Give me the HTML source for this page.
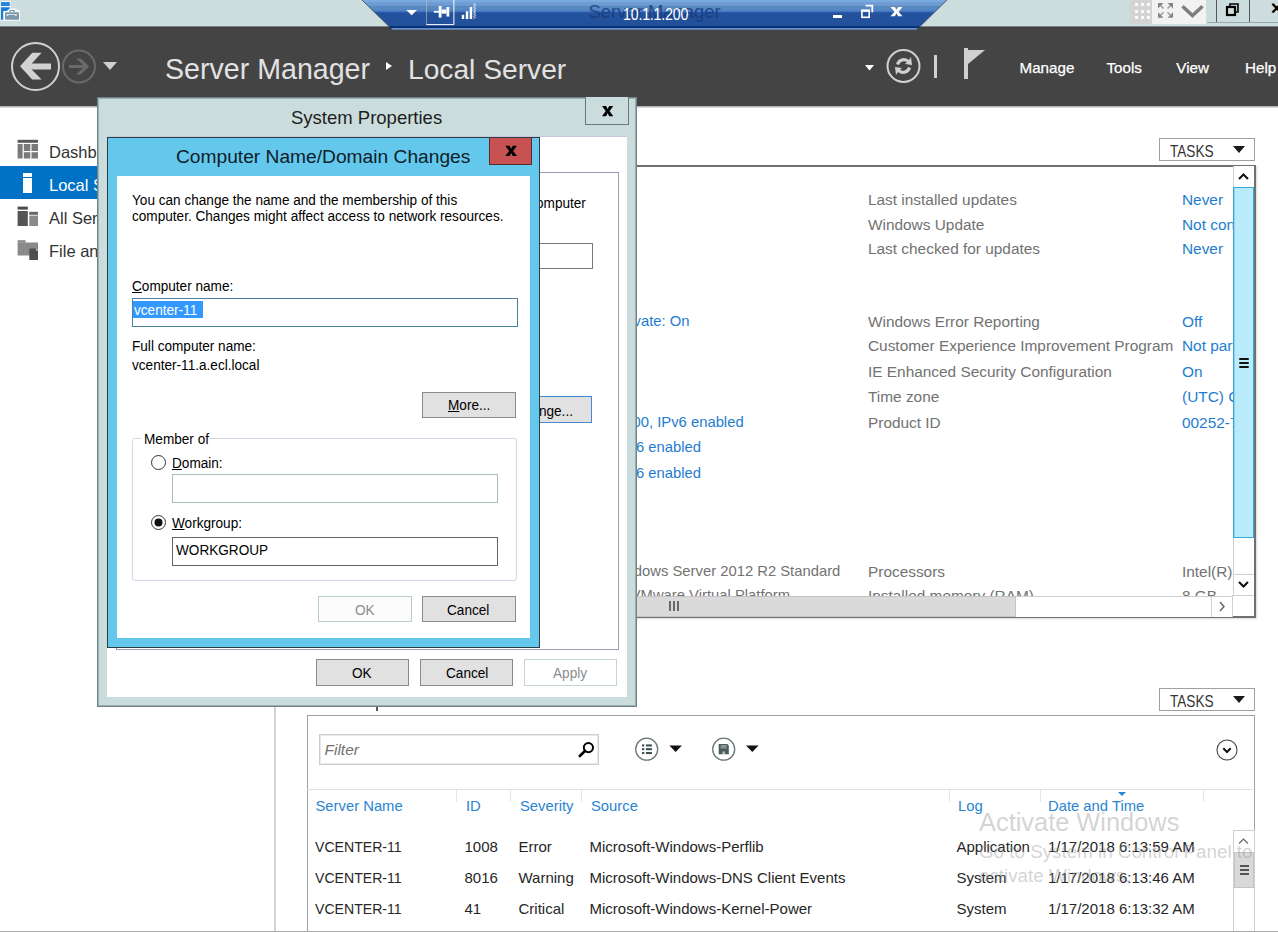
<!DOCTYPE html>
<html><head><meta charset="utf-8">
<style>
*{margin:0;padding:0;box-sizing:border-box}
html,body{width:1278px;height:932px;overflow:hidden;background:#fff;font-family:"Liberation Sans",sans-serif}
.a{position:absolute}
.t{position:absolute;white-space:nowrap;line-height:1}
#topbar{left:0;top:0;width:1278px;height:26px;background:#cddcdc}
#hdr{left:0;top:26px;width:1278px;height:80px;background:#444}
.sm{color:#727272}
.lk{color:#1e7dd0}
.dlg{font-size:15.2px;color:#000;transform-origin:0 0;transform:scaleX(0.895)}
.btn{position:absolute;background:#e1e1e1;border:1px solid #8a8a8a;font-size:12px;text-align:center;color:#000}
.inp{position:absolute;background:#fff;border:1px solid #7a7a7a}
</style></head><body>
<!-- top bar -->
<div id="topbar" class="a"></div>
<div id="hdr" class="a"></div>
<div class="a" style="left:0;top:26px;width:1278px;height:1px;background:#7d8585"></div>
<div class="a" style="left:0;top:27px;width:1278px;height:1px;background:#3c3c3c"></div>
<div class="a" style="left:0;top:106px;width:1278px;height:2px;background:linear-gradient(#a0a0a0,#ececec)"></div>
<!-- app icon -->
<svg class="a" style="left:0;top:0" width="22" height="24">
<path d="M0.5 1.2 H10.7 V20.7 H0.5 Z" fill="#fff" opacity="0.8"/>
<path d="M4 8.5 H15.5 L20.2 11 V20.7 H4 Z" fill="#fff" opacity="0.8"/>
<rect x="1" y="2.1" width="8.8" height="3.9" fill="#2282dc"/>
<path d="M1 7.2 H9.8 V8.5 L6.8 10.9 H3.2 V19.8 H1 Z" fill="#1a7bd8"/>
<path d="M9.3 12.2 V10.4 Q9.3 10 9.8 10 H14.3 Q14.8 10 14.8 10.4 V12.2 H13.6 V11.1 H10.5 V12.2 Z" fill="#7f9aaa"/>
<rect x="5" y="12.2" width="14" height="7.6" rx="0.8" fill="#7b99ab"/>
<path d="M6 14.2 H17.6 L16 16 H15.4 L15 15.1 H8.5 L8 16 H7.5 Z" fill="#f4f8fa"/>
</svg>
<!-- RDP connection bar -->
<svg class="a" style="left:350px;top:0" width="610" height="32" viewBox="0 0 610 32">
<defs><linearGradient id="rg" gradientUnits="userSpaceOnUse" x1="0" y1="0" x2="0" y2="30">
<stop offset="0" stop-color="#7cade0"/><stop offset="0.05" stop-color="#78a9dc"/><stop offset="0.07" stop-color="#749ed6"/><stop offset="0.19" stop-color="#6a98cd"/><stop offset="0.21" stop-color="#5a8ac2"/><stop offset="0.34" stop-color="#5588c2"/><stop offset="0.36" stop-color="#4878c6"/><stop offset="0.4" stop-color="#4576c4"/><stop offset="0.42" stop-color="#24539d"/><stop offset="0.85" stop-color="#22509a"/><stop offset="0.88" stop-color="#0a3478"/><stop offset="0.94" stop-color="#002b72"/><stop offset="0.95" stop-color="#6a90c8"/><stop offset="1" stop-color="#6a90c8"/></linearGradient></defs>
<path d="M12 0 L597 0 L566.5 29.8 L42.5 29.8 Z" fill="url(#rg)"/>
<path d="M12 0 L42.5 29.8 M597 0 L566.5 29.8" stroke="#2a3a4a" stroke-width="1" opacity="0.7"/>
</svg>
<svg class="a" style="left:400px;top:0" width="80" height="28">
<path d="M6.3 10 H17 L11.65 15.2 Z" fill="#fff"/>
<path d="M26.4 0 V24.6" stroke="#c8c0b0" stroke-width="0.8" opacity="0.8"/>
<path d="M53.9 0 V24.6 H26.4" stroke="#fff" stroke-width="1" fill="none"/>
<rect x="33.8" y="10.9" width="5.5" height="1.8" fill="#fff"/>
<rect x="38.7" y="6" width="2.8" height="11.6" fill="#fff"/>
<rect x="41.5" y="9.5" width="5" height="4.2" fill="#fff"/>
<rect x="46.5" y="7" width="2.8" height="9.5" fill="#fff"/>
<rect x="61.8" y="14.8" width="2.4" height="4.2" fill="#fff"/>
<rect x="65.8" y="11.3" width="2.5" height="7.7" fill="#fff"/>
<rect x="69.7" y="7" width="2.5" height="12" fill="#fff"/>
<path d="M73.5 3.2 L75.8 4.3 L73.5 5.4 L75.8 6.5 L73.5 7.6 L75.8 8.7 L73.5 9.8 L75.8 10.9 L73.5 12 L75.8 13.1 L73.5 14.2 L75.8 15.3 L73.5 16.4 L75.8 17.5 L73.5 18.6" stroke="#dfe8f2" stroke-width="0.7" fill="none"/>
</svg>
<div class="t" style="left:588.5px;top:3.2px;font-size:18.45px;color:#17397a;opacity:.8">Server Manager</div>
<div class="t" style="left:622.8px;top:6.5px;font-size:16px;color:#fff;letter-spacing:-0.2px;transform-origin:0 0;transform:scaleX(0.885)">10.1.1.200</div>
<svg class="a" style="left:825px;top:0" width="85" height="28">
<rect x="8" y="15" width="9" height="3" fill="#fff"/>
<path d="M40.6 4.7 H48.2 V12.3 H46.4 V6.4 H40.6 Z" fill="#fff"/>
<rect x="36.9" y="10.5" width="7.3" height="6.8" fill="none" stroke="#fff" stroke-width="1.6"/>
<rect x="36.2" y="9.6" width="8.7" height="2.2" fill="#fff"/>
<path d="M65.50 7.00 L69.82 7.00 L71.50 9.79 L73.18 7.00 L77.50 7.00 L73.54 11.65 L77.50 16.30 L73.18 16.30 L71.50 13.51 L69.82 16.30 L65.50 16.30 L69.46 11.65 Z" fill="#fff"/>
</svg>

<!-- right controls -->
<div class="a" style="left:1130px;top:0;width:22px;height:24px;background:#d4d4d4"></div>
<svg class="a" style="left:1130px;top:0" width="22" height="24">
<g fill="#fafafa">
<rect x="5" y="3" width="3" height="3"/><rect x="11" y="3" width="3" height="3"/><rect x="17" y="3" width="3" height="3"/>
<rect x="5" y="10" width="3" height="3"/><rect x="11" y="10" width="3" height="3"/><rect x="17" y="10" width="3" height="3"/>
<rect x="5" y="16" width="3" height="3"/><rect x="11" y="16" width="3" height="3"/><rect x="17" y="16" width="3" height="3"/>
</g></svg>
<div class="a" style="left:1152px;top:0;width:54px;height:23.5px;background:#f2f2f2"></div>
<svg class="a" style="left:1152px;top:0" width="55" height="24">
<g fill="#7a7a7a" opacity="0.9"><path d="M6 3 H11.5 L6 8.5 Z"/><path d="M21 3 H15.5 L21 8.5 Z"/><path d="M6 17.8 H11.5 L6 12.3 Z"/><path d="M21 17.8 H15.5 L21 12.3 Z"/></g>
<g stroke="#8a8a8a" stroke-width="1.6" opacity="0.8"><path d="M7.5 4.5 L11.5 8.5"/><path d="M19.5 4.5 L15.5 8.5"/><path d="M7.5 16.3 L11.5 12.3"/><path d="M19.5 16.3 L15.5 12.3"/></g>
<path d="M30.5 6.3 L40.5 15.6 L50.5 6.3" stroke="#7e7e7e" stroke-width="3.4" fill="none"/>
</svg>
<div class="a" style="left:1207px;top:22px;width:71px;height:1px;background:#9aa"></div>
<div class="a" style="left:1216px;top:0;width:1px;height:22px;background:#556"></div>
<div class="a" style="left:1249px;top:0;width:1px;height:22px;background:#556"></div>
<svg class="a" style="left:1224px;top:0" width="22" height="20">
<rect x="3" y="7" width="8" height="8" fill="none" stroke="#000" stroke-width="2.2"/>
<path d="M6 7 V4 H14 V12 H11" fill="none" stroke="#000" stroke-width="1.6"/>
</svg>
<div class="t" style="left:1270px;top:1px;font-size:16px;font-weight:bold;color:#000">&#x2715;</div>

<!-- dark header -->
<svg class="a" style="left:0;top:26px" width="140" height="80">
<circle cx="35.5" cy="40.5" r="23.5" fill="none" stroke="#d0d0d0" stroke-width="2"/>
<path d="M20 40.3 L32.2 26.8 H41.6 L31.8 37.6 H51 V43.5 H31.6 L41.6 53.4 H32.2 Z" fill="#d2d2d2"/>
<circle cx="79" cy="40.5" r="16" fill="none" stroke="#6a6a6a" stroke-width="2"/>
<path d="M69 39 H83 L76 32.5 H81 L89 40.5 L81 48.5 H76 L83 42 H69 Z" fill="#6a6a6a"/>
<path d="M103 36 H117 L110 44 Z" fill="#d0d0d0"/>
</svg>
<div class="t" style="left:165px;top:54.5px;font-size:28.6px;color:#e2e2e2">Server Manager</div>
<div class="a" style="left:385.5px;top:61.5px;width:0;height:0;border-top:4.5px solid transparent;border-bottom:4.5px solid transparent;border-left:6.5px solid #fff"></div>
<div class="t" style="left:408px;top:54.5px;font-size:28.2px;color:#e2e2e2">Local Server</div>
<svg class="a" style="left:860px;top:40px" width="140" height="50">
<path d="M865 65 H874 L869.5 70.5 Z" transform="translate(-860,-40)" fill="#fff"/>
<circle cx="43.5" cy="26" r="16" fill="none" stroke="#d0d0d0" stroke-width="2"/>
<path d="M36 24 A8 8 0 0 1 49 20 L51 17 L52 25 L45 24 L47 22 A5.5 5.5 0 0 0 39 25 Z" fill="#d0d0d0"/>
<path d="M51 28 A8 8 0 0 1 38 32 L36 35 L35 27 L42 28 L40 30 A5.5 5.5 0 0 0 48 27 Z" fill="#d0d0d0"/>
<rect x="74" y="15" width="3" height="23" fill="#d0d0d0"/>
<rect x="104" y="8" width="4" height="31" fill="#d0d0d0"/>
<path d="M108 10 H125 L108 24 Z" fill="#d0d0d0"/>
</svg>
<div class="t" style="left:1019.5px;top:59.7px;font-size:15.2px;color:#fff;-webkit-text-stroke:0.25px #fff">Manage</div>
<div class="t" style="left:1106.5px;top:59.7px;font-size:15.2px;color:#fff;-webkit-text-stroke:0.25px #fff">Tools</div>
<div class="t" style="left:1176.3px;top:59.7px;font-size:15.2px;color:#fff;-webkit-text-stroke:0.25px #fff">View</div>
<div class="t" style="left:1245px;top:59.7px;font-size:15.2px;color:#fff;-webkit-text-stroke:0.25px #fff">Help</div>

<!-- sidebar -->
<svg class="a" style="left:17px;top:139px" width="22" height="20">
<rect x="0.6" y="0.8" width="20.4" height="3" fill="#5a5a5a"/>
<g fill="#7a7a7a"><rect x="0.6" y="5" width="5" height="14.5"/><rect x="6.8" y="5" width="6.5" height="7"/><rect x="14.5" y="5" width="6.5" height="7"/><rect x="6.8" y="13.2" width="6.5" height="6.3"/><rect x="14.5" y="13.2" width="6.5" height="6.3"/></g>
</svg>
<div class="t" style="left:49px;top:143.5px;font-size:16.5px;color:#333">Dashboard</div>
<div class="a" style="left:0;top:166px;width:276px;height:33px;background:#0072c6"></div>
<div class="a" style="left:22.5px;top:173px;width:9.5px;height:3.5px;background:#fff"></div>
<div class="a" style="left:22.5px;top:177.7px;width:9.5px;height:15.8px;background:#fff"></div>
<div class="t" style="left:49px;top:176.8px;font-size:16.5px;color:#fff">Local Server</div>
<svg class="a" style="left:17px;top:206px" width="22" height="21">
<rect x="0.6" y="0.6" width="10.2" height="3" fill="#4a4a4a"/><rect x="0.6" y="5" width="10.2" height="15" fill="#555"/>
<rect x="12.3" y="5.8" width="8.7" height="3" fill="#666"/><rect x="12.3" y="9.6" width="8.7" height="10.4" fill="#8a8a8a"/>
</svg>
<div class="t" style="left:49px;top:209.8px;font-size:16.5px;color:#333">All Servers</div>
<svg class="a" style="left:17px;top:239px" width="22" height="22">
<rect x="0.6" y="1.2" width="8" height="2.5" fill="#8a8a8a"/><rect x="0.6" y="3.5" width="20.4" height="13" fill="#8a8a8a"/>
<path d="M12.3 9.6 H19 L21 11.6 V21 H12.3 Z" fill="#4f4f4f"/><path d="M19 9.6 L21 11.6 H19 Z" fill="#ddd"/>
</svg>
<div class="t" style="left:49px;top:243.3px;font-size:16.5px;color:#333">File and Storage Services</div>
<div class="a" style="left:274px;top:106px;width:2px;height:826px;background:#d4d4d4"></div>

<!-- content: properties -->
<div class="a" style="left:1159px;top:138px;width:96px;height:23px;border:1px solid #a0a0a0;background:#fff"></div>
<div class="t" style="left:1170.2px;top:142.8px;font-size:16.2px;color:#333;transform-origin:0 0;transform:scaleX(0.84)">TASKS</div>
<div class="a" style="left:1233.4px;top:145.7px;width:0;height:0;border-left:6.5px solid transparent;border-right:6.5px solid transparent;border-top:7px solid #1a1a1a"></div>
<div class="a" style="left:600px;top:165px;width:656px;height:453px;border:1px solid #707070;border-width:2px 2px 2px 1px;background:#fff;box-shadow:1px 1px 2px rgba(0,0,0,.15)"></div>
<!-- properties text -->
<div id="props" class="a" style="left:0;top:0;width:1278px;height:932px;clip-path:inset(166px 45px 336px 601px);font-size:15.4px">
<div class="t sm" style="left:868px;top:192.2px">Last installed updates</div>
<div class="t sm lk" style="left:1182px;top:192.2px">Never</div>
<div class="t sm" style="left:868px;top:216.6px">Windows Update</div>
<div class="t sm lk" style="left:1182px;top:216.6px">Not configured</div>
<div class="t sm" style="left:868px;top:241.3px">Last checked for updates</div>
<div class="t sm lk" style="left:1182px;top:241.3px">Never</div>
<div class="t sm" style="left:868px;top:313.5px">Windows Error Reporting</div>
<div class="t sm lk" style="left:1182px;top:313.5px">Off</div>
<div class="t sm" style="left:868px;top:337.5px">Customer Experience Improvement Program</div>
<div class="t sm lk" style="left:1182px;top:337.5px">Not participating</div>
<div class="t sm" style="left:868px;top:363.5px">IE Enhanced Security Configuration</div>
<div class="t sm lk" style="left:1182px;top:363.5px">On</div>
<div class="t sm" style="left:868px;top:388.5px">Time zone</div>
<div class="t sm lk" style="left:1182px;top:388.5px">(UTC) Coordinated Universal Time</div>
<div class="t sm" style="left:868px;top:414.5px">Product ID</div>
<div class="t sm lk" style="left:1182px;top:414.5px">00252-70000-00000-AA535</div>
<div class="t sm" style="left:868px;top:563.5px">Processors</div>
<div class="t sm" style="left:1182px;top:563.5px">Intel(R) Xeon(R) CPU</div>
<div class="t sm" style="left:868px;top:587.5px">Installed memory (RAM)</div>
<div class="t sm" style="left:1182px;top:587.5px">8 GB</div>
<div class="t sm lk" style="right:588.5px;top:314.0px;font-size:14.8px">Domain: Off, Private: On</div>
<div class="t sm lk" style="right:534.4px;top:415.0px;font-size:14.8px">10.1.1.200, IPv6 enabled</div>
<div class="t sm lk" style="right:577.0px;top:440.0px;font-size:14.8px">IPv4 address assigned by DHCP, IPv6 enabled</div>
<div class="t sm lk" style="right:577.0px;top:466.0px;font-size:14.8px">IPv4 address assigned by DHCP, IPv6 enabled</div>
<div class="t sm" style="right:437.7px;top:564.0px;font-size:14.8px">Microsoft Windows Server 2012 R2 Standard</div>
<div class="t sm" style="right:488.0px;top:588.0px;font-size:14.8px">VMware, Inc. VMware Virtual Platform</div>
</div>
<!-- v scrollbar -->
<div class="a" style="left:1233px;top:166px;width:21px;height:430px;background:#fff;border-left:1px solid #d0d0d0"></div>
<div class="a" style="left:1233px;top:187px;width:21.3px;height:351px;background:#b9ebfb;border:2px solid #35a9d6;border-width:1.5px 1.5px 1.5px 1.5px;box-shadow:inset 1px 0 0 #8fd0ea"></div>
<svg class="a" style="left:1233px;top:166px" width="21" height="22"><path d="M6 13 L10.5 8.5 L15 13" stroke="#111" stroke-width="2" fill="none"/></svg>
<div class="a" style="left:1239.3px;top:358px;width:9.5px;height:1.8px;background:#111;border-radius:1px"></div>
<div class="a" style="left:1239.3px;top:362.1px;width:9.5px;height:1.8px;background:#111;border-radius:1px"></div>
<div class="a" style="left:1239.3px;top:366px;width:9.5px;height:1.8px;background:#111;border-radius:1px"></div>
<div class="a" style="left:1233px;top:574px;width:21px;height:1px;background:#d0d0d0"></div>
<svg class="a" style="left:1233px;top:575px" width="21" height="20"><path d="M6 7 L10.5 11.5 L15 7" stroke="#111" stroke-width="2" fill="none"/></svg>
<!-- h scrollbar -->
<div class="a" style="left:600px;top:596px;width:633px;height:21px;background:#fff;border-top:1px solid #d0d0d0"></div>
<div class="a" style="left:600px;top:596px;width:416px;height:21px;background:#dadada;border:1px solid #c4c4c4"></div>
<div class="a" style="left:669px;top:601px;width:1.6px;height:9.5px;background:#6a6a6a"></div>
<div class="a" style="left:673px;top:601px;width:1.6px;height:9.5px;background:#6a6a6a"></div>
<div class="a" style="left:677px;top:601px;width:1.6px;height:9.5px;background:#6a6a6a"></div>
<div class="a" style="left:1211px;top:596px;width:1px;height:21px;background:#d0d0d0"></div>
<svg class="a" style="left:1212px;top:596px" width="20" height="21"><path d="M8 6 L12 10.5 L8 15" stroke="#666" stroke-width="1.5" fill="none"/></svg>
<div class="a" style="left:1232px;top:596px;width:1px;height:21px;background:#d0d0d0"></div>
<div class="a" style="left:1232px;top:595px;width:22px;height:1px;background:#d0d0d0"></div>

<!-- content: events -->
<div class="a" style="left:1159px;top:688px;width:96px;height:23px;border:1px solid #a0a0a0;background:#fff"></div>
<div class="t" style="left:1170.2px;top:692.8px;font-size:16.2px;color:#333;transform-origin:0 0;transform:scaleX(0.84)">TASKS</div>
<div class="a" style="left:1233.4px;top:695.7px;width:0;height:0;border-left:6.5px solid transparent;border-right:6.5px solid transparent;border-top:7px solid #1a1a1a"></div>
<div class="a" style="left:307px;top:715px;width:948px;height:230px;border:1px solid #a0a0a0;background:#fff"></div>
<div class="a" style="left:376px;top:706px;width:1.5px;height:5px;background:#556"></div>
<div class="a" style="left:319px;top:734px;width:280px;height:31px;border:1px solid #cdcdcd;box-shadow:inset 1px 1px 0 #e8e8e8,inset -1px -1px 0 #e8e8e8;background:#fff"></div>
<div class="t" style="left:324.5px;top:742.4px;font-size:15.5px;font-style:italic;color:#727272">Filter</div>
<svg class="a" style="left:577px;top:738px" width="20" height="22"><circle cx="11.4" cy="9.6" r="4.6" stroke="#000" stroke-width="2" fill="none"/><path d="M8.2 12.8 L2.8 18" stroke="#000" stroke-width="2.6" stroke-linecap="round"/></svg>
<svg class="a" style="left:630px;top:736px" width="140" height="30">
<circle cx="16.7" cy="13.2" r="11" stroke="#6a7878" stroke-width="1.3" fill="none"/>
<g fill="#3e5252"><rect x="12" y="8.4" width="2.3" height="2.1"/><rect x="12" y="12.1" width="2.3" height="2.1"/><rect x="12" y="16" width="2.3" height="2.1"/><rect x="15.9" y="8.4" width="6" height="2.1"/><rect x="15.9" y="12.1" width="6" height="2.1"/><rect x="15.9" y="16" width="6" height="2.1"/></g>
<path d="M39.4 9.6 H51.9 L45.65 16 Z" fill="#111"/>
<circle cx="93.7" cy="13.2" r="11" stroke="#6a7878" stroke-width="1.3" fill="none"/>
<path d="M88.7 8 H97.3 L98.8 9.5 V18.3 H88.7 Z" fill="#4a5c5c"/><rect x="90.6" y="9" width="6" height="3.5" fill="#fff" opacity="0.35"/><rect x="92.5" y="15.5" width="2.5" height="2.8" fill="#fff" opacity="0.6"/>
<path d="M116 9.6 H128.6 L122.3 16 Z" fill="#111"/>
</svg>
<svg class="a" style="left:1215.4px;top:738px" width="26" height="26"><circle cx="12" cy="12" r="10" stroke="#444" stroke-width="1.1" fill="none"/><path d="M8.3 10.3 L12 14 L15.7 10.3" stroke="#111" stroke-width="2" fill="none"/></svg>
<div class="a" style="left:307px;top:789px;width:949px;height:1px;background:#e0e0e0"></div>
<div class="a" style="left:456px;top:790px;width:1px;height:12px;background:#e4e4e4"></div>
<div class="a" style="left:510px;top:790px;width:1px;height:12px;background:#e4e4e4"></div>
<div class="a" style="left:581px;top:790px;width:1px;height:12px;background:#e4e4e4"></div>
<div class="a" style="left:949px;top:790px;width:1px;height:12px;background:#e4e4e4"></div>
<div class="a" style="left:1040px;top:790px;width:1px;height:12px;background:#e4e4e4"></div>
<div class="a" style="left:1203px;top:790px;width:1px;height:12px;background:#e4e4e4"></div>
<div id="ev" class="a" style="left:0;top:0;width:1278px;height:932px;font-size:15px">
<div class="t sm lk" style="left:315.5px;top:798.9px;font-size:14.8px;color:#2a84d2">Server Name</div>
<div class="t sm lk" style="left:466px;top:798.9px;font-size:14.8px;color:#2a84d2">ID</div>
<div class="t sm lk" style="left:520px;top:798.9px;font-size:14.8px;color:#2a84d2">Severity</div>
<div class="t sm lk" style="left:591px;top:798.9px;font-size:14.8px;color:#2a84d2">Source</div>
<div class="t sm lk" style="left:958px;top:798.9px;font-size:14.8px;color:#2a84d2">Log</div>
<div class="t sm lk" style="left:1048px;top:798.9px;font-size:14.8px;color:#2a84d2">Date and Time</div>
<div class="a" style="left:1118px;top:792px;width:0;height:0;border-left:4px solid transparent;border-right:4px solid transparent;border-top:4.5px solid #2a84d2"></div>
<div class="t" style="left:314.5px;top:838.7px;font-size:15px;color:#262626;transform-origin:0 0;transform:scaleX(0.94)">VCENTER-11</div>
<div class="t" style="left:464.5px;top:838.7px;font-size:15.0px;color:#262626">1008</div>
<div class="t" style="left:518.5px;top:838.7px;font-size:15.0px;color:#262626">Error</div>
<div class="t" style="left:589.5px;top:838.7px;font-size:15.0px;color:#262626">Microsoft-Windows-Perflib</div>
<div class="t" style="left:956.5px;top:838.7px;font-size:15.0px;color:#262626">Application</div>
<div class="t" style="left:1048px;top:838.7px;font-size:15.0px;color:#262626">1/17/2018 6:13:59 AM</div>
<div class="t" style="left:314.5px;top:869.8px;font-size:15px;color:#262626;transform-origin:0 0;transform:scaleX(0.94)">VCENTER-11</div>
<div class="t" style="left:464.5px;top:869.8px;font-size:15.0px;color:#262626">8016</div>
<div class="t" style="left:518.5px;top:869.8px;font-size:15.0px;color:#262626">Warning</div>
<div class="t" style="left:589.5px;top:869.8px;font-size:15.0px;color:#262626">Microsoft-Windows-DNS Client Events</div>
<div class="t" style="left:956.5px;top:869.8px;font-size:15.0px;color:#262626">System</div>
<div class="t" style="left:1048px;top:869.8px;font-size:15.0px;color:#262626">1/17/2018 6:13:46 AM</div>
<div class="t" style="left:314.5px;top:901.0px;font-size:15px;color:#262626;transform-origin:0 0;transform:scaleX(0.94)">VCENTER-11</div>
<div class="t" style="left:464.5px;top:901.0px;font-size:15.0px;color:#262626">41</div>
<div class="t" style="left:518.5px;top:901.0px;font-size:15.0px;color:#262626">Critical</div>
<div class="t" style="left:589.5px;top:901.0px;font-size:15.0px;color:#262626">Microsoft-Windows-Kernel-Power</div>
<div class="t" style="left:956.5px;top:901.0px;font-size:15.0px;color:#262626">System</div>
<div class="t" style="left:1048px;top:901.0px;font-size:15.0px;color:#262626">1/17/2018 6:13:32 AM</div>
</div>
<!-- events scrollbar -->
<div class="a" style="left:1233px;top:830px;width:21.5px;height:102px;background:#fff;border:1px solid #d0d0d0;border-bottom:none"></div>
<svg class="a" style="left:1233px;top:831px" width="21" height="20"><path d="M6 12.5 L10.5 8 L15 12.5" stroke="#666" stroke-width="1.2" fill="none"/></svg>
<div class="a" style="left:1234px;top:851.5px;width:20px;height:36px;background:#d9d9d9;border:1px solid #c4c4c4"></div>
<div class="a" style="left:1239.5px;top:865px;width:9px;height:1.6px;background:#555"></div>
<div class="a" style="left:1239.5px;top:869px;width:9px;height:1.6px;background:#555"></div>
<div class="a" style="left:1239.5px;top:873px;width:9px;height:1.6px;background:#555"></div>
<div class="a" style="left:0;top:931px;width:1278px;height:1px;background:#a8a8a8"></div>
<!-- watermark -->
<div class="t" style="left:979px;top:809.5px;font-size:25.4px;color:rgba(150,150,150,.42)">Activate Windows</div>
<div class="t" style="left:979px;top:843.4px;font-size:18.8px;color:rgba(150,150,150,.42)">Go to System in Control Panel to</div>
<div class="t" style="left:979px;top:867.4px;font-size:18.8px;color:rgba(150,150,150,.42)">activate Windows.</div>
<!-- System Properties -->
<div class="a" style="left:97px;top:97px;width:539.5px;height:610px;background:#cbdcdc;border:1px solid #6e8585;box-shadow:inset 1px 1px 0 #9ab0b0,inset -1px -1px 0 #9ab0b0"></div>
<div class="t" style="left:291px;top:109px;font-size:18.5px;color:#1e1e1e">System Properties</div>
<div class="a" style="left:585px;top:97px;width:44px;height:28px;border:1px solid #6a7a7a;border-top:none;background:#cbdcdc"></div>
<svg class="a" style="left:585px;top:97px" width="44" height="28"><path d="M17.00 9.00 L21.07 9.00 L22.65 12.06 L24.23 9.00 L28.30 9.00 L24.57 14.10 L28.30 19.20 L24.23 19.20 L22.65 16.14 L21.07 19.20 L17.00 19.20 L20.73 14.10 Z" fill="#000"/></svg>
<div class="a" style="left:107px;top:136px;width:520px;height:561px;background:#fff;border-top:1px solid #c8c8dc"></div>
<div class="a" style="left:116px;top:172px;width:503px;height:478px;border:1px solid #9b9bb3"></div>
<div class="t dlg" style="left:499.1px;top:194.8px;font-size:15.2px">your computer</div>
<div class="inp" style="left:490px;top:243px;width:103px;height:26px;border-color:#7a7a7a"></div>
<div class="btn" style="left:480px;top:396px;width:112px;height:27px;border:1.5px solid #4a88cc;background:#e1e1e1"></div>
<div class="t dlg" style="left:514.1px;top:403.40px;font-size:15.2px">Change...</div>
<div class="btn" style="left:316px;top:659px;width:93px;height:27px"></div>
<div class="t dlg" style="left:352px;top:664.84px;font-size:15.2px">OK</div>
<div class="btn" style="left:420px;top:659px;width:93px;height:27px"></div>
<div class="t dlg" style="left:446px;top:664.84px;font-size:15.2px">Cancel</div>
<div class="btn" style="left:524px;top:659px;width:93px;height:27px;background:#fff;border-color:#c5d5d5"></div>
<div class="t dlg" style="left:553px;top:664.84px;font-size:15.2px;color:#8c8c8c">Apply</div>

<!-- Computer name dialog -->
<div class="a" style="left:107px;top:137px;width:433px;height:511px;background:#63c8ec;border:1px solid #2c3c44"></div>
<div class="t" style="left:176px;top:147px;font-size:19.2px;color:#10202a">Computer Name/Domain Changes</div>
<div class="a" style="left:489px;top:138px;width:43px;height:27px;background:#c85252;border:1px solid #5a2828;border-top:none"></div>
<svg class="a" style="left:489px;top:137px" width="43" height="29"><path d="M16.30 8.80 L20.51 8.80 L22.15 11.86 L23.79 8.80 L28.00 8.80 L24.14 13.90 L28.00 19.00 L23.79 19.00 L22.15 15.94 L20.51 19.00 L16.30 19.00 L20.16 13.90 Z" fill="#000"/></svg>
<div class="a" style="left:117px;top:176px;width:413px;height:462px;background:#fff"></div>
<div class="t dlg" style="left:132px;top:191.84px;font-size:15.2px">You can change the name and the membership of this</div>
<div class="t dlg" style="left:132px;top:207.84px;font-size:15.2px">computer. Changes might affect access to network resources.</div>
<div class="t dlg" style="left:132px;top:277.84px;font-size:15.2px"><u>C</u>omputer name:</div>
<div class="inp" style="left:132px;top:298px;width:386px;height:29px;border-color:#4a7fa4"></div>
<div class="a" style="left:133px;top:301px;width:70px;height:17px;background:#3399ff"></div>
<div class="t dlg" style="left:134px;top:301.84px;font-size:15.2px;color:#fff">vcenter-11</div>
<div class="t dlg" style="left:132px;top:337.84px;font-size:15.2px">Full computer name:</div>
<div class="t dlg" style="left:132px;top:356.84px;font-size:15.2px">vcenter-11.a.ecl.local</div>
<div class="btn" style="left:422px;top:392px;width:94px;height:26px"></div>
<div class="t dlg" style="left:448px;top:396.84px;font-size:15.2px"><u>M</u>ore...</div>
<div class="a" style="left:132px;top:438px;width:385px;height:143px;border:1px solid #d5d5e8;border-radius:3px"></div>
<div class="a" style="left:141px;top:430px;width:68px;height:14px;background:#fff"></div>
<div class="t dlg" style="left:144px;top:430.84px;font-size:15.2px">Member of</div>
<svg class="a" style="left:150px;top:454px" width="18" height="18"><circle cx="8.5" cy="8.5" r="7" fill="#fff" stroke="#333" stroke-width="1"/></svg>
<div class="t dlg" style="left:172px;top:454.84px;font-size:15.2px"><u>D</u>omain:</div>
<div class="inp" style="left:172px;top:474px;width:326px;height:29px;border-color:#a8bcbc"></div>
<svg class="a" style="left:150px;top:514px" width="18" height="18"><circle cx="8.5" cy="8.5" r="7" fill="#fff" stroke="#333" stroke-width="1"/><circle cx="8.5" cy="8.5" r="4" fill="#111"/></svg>
<div class="t dlg" style="left:172px;top:514.84px;font-size:15.2px"><u>W</u>orkgroup:</div>
<div class="inp" style="left:172px;top:537px;width:326px;height:29px;border-color:#646464"></div>
<div class="t dlg" style="left:176px;top:541.84px;font-size:15.2px">WORKGROUP</div>
<div class="btn" style="left:318px;top:596px;width:94px;height:26px;background:#fcfcfc;border-color:#b8cccc"></div>
<div class="t dlg" style="left:355px;top:601.84px;font-size:15.2px;color:#8c8c8c">OK</div>
<div class="btn" style="left:422px;top:596px;width:94px;height:26px"></div>
<div class="t dlg" style="left:447px;top:601.84px;font-size:15.2px">Cancel</div>
</body></html>
